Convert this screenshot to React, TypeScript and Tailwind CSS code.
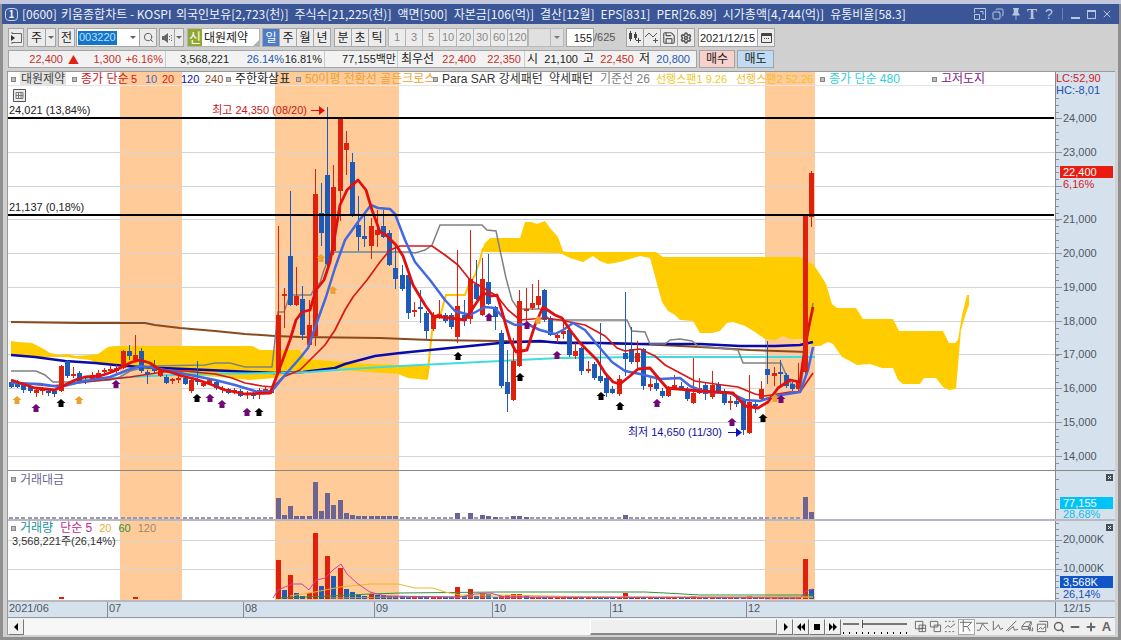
import { useState } from "react";
import type { ReactNode } from "react";
import clsx from "clsx";
import { Copy, Minus, Plus, Save, Search, Settings, X } from "lucide-react";
import { BsPinFill } from "react-icons/bs";

const UP = "#e0200c";
const DOWN = "#1e5ab8";

// high, body top, body bottom, low, direction (1 = up)
type Candle = [number, number, number, number, 0 | 1];

const candles: Candle[] = [
  [380, 382, 387, 388, 0],
  [380, 382, 387, 388, 0],
  [384, 385, 390, 393, 0],
  [385, 386, 391, 393, 0],
  [389, 390, 393, 397, 1],
  [387, 389, 391, 395, 1],
  [390, 391, 393, 396, 0],
  [390, 391, 394, 397, 0],
  [365, 366, 391, 392, 1],
  [360, 361, 376, 378, 0],
  [367, 374, 376, 378, 1],
  [371, 373, 381, 383, 0],
  [378, 380, 382, 384, 0],
  [372, 376, 379, 380, 1],
  [370, 373, 378, 379, 1],
  [368, 370, 372, 375, 1],
  [366, 369, 371, 373, 1],
  [365, 368, 371, 373, 1],
  [350, 351, 368, 369, 1],
  [345, 351, 356, 360, 0],
  [335, 355, 360, 361, 1],
  [348, 351, 371, 373, 0],
  [370, 372, 374, 384, 0],
  [360, 366, 371, 373, 0],
  [369, 371, 376, 377, 1],
  [375, 377, 383, 384, 0],
  [378, 379, 381, 384, 1],
  [376, 378, 380, 383, 1],
  [376, 378, 384, 385, 0],
  [379, 380, 391, 393, 1],
  [361, 379, 382, 385, 0],
  [381, 383, 386, 387, 1],
  [378, 380, 383, 385, 1],
  [381, 382, 388, 390, 0],
  [386, 388, 390, 393, 1],
  [388, 389, 393, 394, 0],
  [388, 390, 392, 394, 1],
  [389, 391, 396, 397, 0],
  [391, 393, 395, 399, 1],
  [392, 394, 396, 399, 0],
  [388, 390, 393, 399, 1],
  [387, 389, 392, 393, 1],
  [388, 390, 393, 394, 1],
  [226, 315, 373, 375, 1],
  [288, 294, 296, 328, 1],
  [191, 256, 305, 306, 0],
  [267, 296, 305, 306, 1],
  [286, 299, 335, 340, 0],
  [300, 325, 345, 347, 1],
  [169, 194, 336, 346, 1],
  [183, 213, 233, 246, 0],
  [107, 175, 264, 270, 0],
  [165, 187, 251, 255, 1],
  [118, 118, 191, 221, 1],
  [131, 143, 150, 175, 1],
  [153, 162, 216, 217, 0],
  [196, 225, 237, 251, 0],
  [215, 236, 239, 247, 0],
  [218, 226, 246, 259, 1],
  [210, 230, 235, 247, 1],
  [210, 226, 237, 238, 0],
  [230, 233, 265, 266, 0],
  [245, 268, 279, 289, 0],
  [265, 275, 289, 291, 0],
  [273, 275, 313, 319, 0],
  [302, 310, 312, 317, 1],
  [290, 307, 309, 323, 0],
  [311, 313, 331, 339, 0],
  [312, 316, 329, 331, 1],
  [300, 314, 318, 319, 1],
  [313, 315, 321, 323, 0],
  [313, 315, 327, 329, 0],
  [250, 306, 337, 343, 1],
  [300, 315, 321, 326, 0],
  [230, 279, 319, 324, 1],
  [260, 284, 299, 300, 0],
  [258, 279, 315, 316, 1],
  [254, 282, 304, 305, 0],
  [306, 307, 317, 330, 0],
  [330, 333, 386, 388, 0],
  [350, 382, 394, 412, 0],
  [338, 361, 400, 401, 1],
  [290, 301, 366, 367, 1],
  [288, 309, 311, 325, 1],
  [284, 303, 308, 310, 1],
  [280, 296, 305, 309, 1],
  [289, 290, 320, 322, 0],
  [316, 318, 335, 336, 0],
  [332, 335, 338, 343, 1],
  [318, 331, 334, 339, 1],
  [329, 330, 355, 357, 0],
  [343, 351, 356, 359, 1],
  [347, 348, 371, 375, 0],
  [361, 369, 371, 373, 1],
  [362, 364, 378, 380, 0],
  [323, 376, 381, 383, 0],
  [376, 378, 393, 397, 0],
  [386, 389, 393, 394, 0],
  [375, 379, 394, 396, 1],
  [292, 353, 359, 376, 0],
  [327, 349, 362, 364, 0],
  [341, 353, 362, 368, 1],
  [348, 349, 386, 390, 0],
  [378, 384, 387, 391, 1],
  [377, 383, 389, 391, 0],
  [388, 391, 396, 398, 0],
  [386, 388, 396, 397, 1],
  [375, 385, 388, 389, 1],
  [382, 386, 388, 390, 0],
  [387, 390, 399, 401, 0],
  [358, 393, 403, 404, 1],
  [378, 388, 393, 394, 1],
  [383, 385, 394, 400, 0],
  [371, 385, 397, 399, 1],
  [382, 384, 391, 393, 0],
  [389, 391, 403, 405, 0],
  [396, 401, 403, 410, 1],
  [398, 401, 404, 407, 0],
  [398, 400, 430, 435, 0],
  [375, 402, 433, 434, 1],
  [400, 404, 406, 413, 0],
  [381, 389, 399, 401, 1],
  [341, 369, 375, 384, 0],
  [367, 373, 376, 386, 1],
  [360, 372, 374, 388, 0],
  [373, 375, 386, 388, 0],
  [382, 384, 389, 391, 0],
  [363, 382, 389, 391, 1],
  [214, 215, 372, 374, 1],
  [171, 173, 217, 227, 1],
];

const barX = (i: number) => Math.round(11 + i * 6.2);

// bar index -> height in pixels, everything else is a flat tick
const turnover: Record<number, number> = {
  43: 21, 44: 4, 45: 13, 46: 3, 47: 3, 48: 3, 49: 37, 50: 8, 51: 26, 52: 14, 53: 19,
  54: 6, 55: 4, 56: 3, 57: 3, 58: 3, 59: 3, 60: 3, 61: 3, 62: 3, 72: 6, 74: 6, 76: 4,
  77: 3, 78: 2, 81: 3, 82: 3, 83: 2, 99: 4, 128: 22, 129: 7,
};

const volume: Record<number, [number, 0 | 1]> = {
  8: [2, 1], 20: [2, 1], 43: [39, 1], 44: [9, 0], 45: [24, 1], 46: [6, 0], 47: [3, 0],
  48: [6, 1], 49: [66, 1], 50: [13, 0], 51: [43, 1], 52: [23, 0], 53: [31, 1],
  54: [10, 0], 55: [7, 0], 56: [4, 0], 57: [3, 0], 58: [5, 1], 59: [4, 0], 60: [4, 0],
  61: [3, 0], 62: [3, 0], 63: [3, 0], 64: [2, 0], 65: [3, 1], 66: [2, 0], 67: [3, 0],
  72: [12, 1], 73: [3, 0], 74: [10, 1], 75: [3, 0], 76: [6, 1], 77: [5, 0], 79: [3, 1],
  80: [4, 1], 81: [5, 1], 82: [5, 1], 83: [4, 0], 86: [2, 0], 87: [2, 1], 99: [6, 1],
  110: [3, 1], 119: [3, 1], 128: [40, 1], 129: [10, 0],
};

const bands = [
  [120, 62],
  [275, 124],
  [765, 50],
];

const cloud = [
  "11,341 18,342 32,343 42,348 50,353 60,355 66,354 76,356 90,355 98,354 108,347 114,346 252,346 260,350 300,350 305,359 330,361 370,364 430,366 427,380 408,378 398,374 370,372 340,370 300,372 290,372 275,378 250,380 220,377 180,375 135,368 115,365 100,365 90,360 65,357 35,357 11,355",
  "482,252 484,244 490,238 520,238 525,222 532,222 537,224 545,221 550,228 558,237 563,251 566,252 656,252 663,257 798,257 803,258 808,262 813,264 820,274 826,284 832,304 837,308 856,308 863,319 893,319 899,331 943,331 949,343 955,343 958,340 962,315 967,295 969,295 969,305 966,313 961,330 956,389 949,390 943,387 936,378 924,378 920,384 903,384 898,380 893,368 882,368 870,364 857,365 850,361 842,357 833,344 828,342 820,346 813,346 803,339 790,339 783,336 775,340 765,339 755,332 745,326 733,322 727,323 720,331 712,333 700,333 693,321 680,320 675,315 668,311 662,302 656,280 650,258 640,256 620,262 608,264 600,261 593,256 583,262 570,258 560,253",
];

const lines = [
  { color: "#ffc400", width: 2, points: "427,379 432,332 437,315 441,313 446,295 465,295 468,287 475,275 480,260 483,248" },
  { color: "#8a4a20", width: 2, points: "11,322 80,323 145,323 155,325 180,328 215,331 245,334 275,336 300,337 380,338 430,340 500,341 600,343 640,344 700,347 750,350 808,352" },
  { color: "#0a0aa8", width: 2.5, points: "11,355 35,357 65,361 95,363 115,365 140,367 185,369 230,371 275,373 303,372 335,368 345,364 375,356 400,353 430,350 460,347 480,345 500,343 540,341 560,343 600,343 640,344 700,344 740,346 775,346 800,345 813,342" },
  { color: "#40dcdc", width: 2, points: "80,380 115,378 150,376 200,374 275,373 310,372 350,369 400,366 440,364 500,361 560,358 640,357 815,357" },
  { color: "#808080", width: 1.5, points: "11,371 36,371 45,375 53,382 75,382 110,380 120,377 130,371 150,366 205,365 215,363 230,363 245,367 272,367 275,340 278,312 284,312 290,295 311,295 316,285 320,283 324,270 330,255 335,252 410,252 415,253 425,250 432,245 440,225 482,225 487,230 496,231 500,250 506,278 512,300 518,309 540,309 550,320 627,320 632,331 645,332 650,344 665,344 670,340 680,339 692,341 698,346 738,350 743,363 781,363 787,377 793,387 801,385 808,335 813,303" },
  { color: "#d81818", width: 1.7, points: "11,382 50,386 70,384 95,381 130,377 150,374 170,371 185,371 215,374 232,378 245,383 262,386 273,387 283,377 300,370 310,360 325,345 335,330 345,310 353,297 367,280 380,262 390,250 400,246 432,246 445,255 458,265 470,280 490,292 497,296 508,310 520,320 545,318 560,320 585,325 605,336 617,348 625,351 640,349 655,356 665,365 680,373 695,381 715,384 738,387 755,394 765,396 790,392 800,392 813,373" },
  { color: "#4169e1", width: 2.5, points: "11,383 40,384 60,387 80,382 110,377 128,370 140,366 155,368 175,372 190,375 215,380 235,385 258,392 272,391 285,375 300,358 308,348 317,322 326,297 335,268 345,240 358,222 371,205 378,208 390,209 395,214 405,240 415,262 430,280 445,300 455,311 470,315 485,307 495,308 505,320 515,325 527,324 540,330 555,334 563,330 573,323 585,330 600,348 612,362 625,371 640,374 660,379 680,378 690,386 705,392 730,393 745,400 760,401 775,396 800,392 808,370 813,347" },
  { color: "#e01010", width: 2.8, points: "11,380 20,383 35,388 55,390 65,385 75,380 85,377 100,376 112,372 122,367 132,362 140,360 150,363 160,370 170,372 182,376 195,379 210,384 225,390 245,394 270,393 276,378 290,340 296,320 302,312 310,310 316,290 324,280 330,262 335,235 340,205 347,190 358,180 366,190 372,210 380,232 386,235 396,245 403,256 413,285 425,305 433,316 450,318 465,320 475,305 483,293 492,296 497,295 503,315 510,340 516,352 527,350 535,325 543,307 555,315 562,318 570,330 580,343 597,360 605,373 613,382 620,384 630,376 638,369 650,368 660,380 667,388 700,391 733,393 745,406 758,408 768,402 778,388 790,380 800,382 806,340 813,307" },
];

const marks: { color: string; at: [number, number][] }[] = [
  { color: "#f0a030", at: [[17, 400], [79, 400], [321, 258], [333, 290], [538, 320], [775, 398]] },
  { color: "#700878", at: [[36, 408], [116, 384], [210, 398], [222, 404], [247, 412], [489, 317], [527, 325], [557, 355], [657, 403], [732, 422], [781, 399]] },
  { color: "#000000", at: [[61, 403], [197, 398], [259, 412], [458, 356], [520, 377], [601, 396], [620, 406], [763, 418]] },
];

const prices = [
  [118, "24,000"],
  [152, "23,000"],
  [186, ""],
  [219, "21,000"],
  [253, "20,000"],
  [287, "19,000"],
  [321, "18,000"],
  [354, "17,000"],
  [388, "16,000"],
  [422, "15,000"],
  [456, "14,000"],
] as const;

const months = [
  [108, "07"],
  [244, "08"],
  [375, "09"],
  [493, "10"],
  [611, "11"],
  [747, "12"],
] as const;

const Bands = ({ y, height }: { y: number; height: number }) => (
  <>
    {bands.map(([x, width]) => (
      <rect key={x} x={x} y={y} width={width} height={height} fill="#ffcc99" />
    ))}
  </>
);

const Bullet = () => <span className="mr-1 size-[5px] shrink-0 border border-[#888] bg-[#bbb]" />;

const Legend = ({ width, color, bullet, children }: { width: string; color: string; bullet?: boolean; children: ReactNode }) => (
  <span className={clsx("flex shrink-0 items-center whitespace-nowrap", width, color)}>
    {bullet && <Bullet />}
    {children}
  </span>
);

const PricePanel = () => (
  <div className="relative min-w-0 flex-1 bg-white">
    <svg viewBox="8 72 1047 398" preserveAspectRatio="none" className="block h-[398px] w-full">
      <Bands y={72} height={398} />
      {prices.map(([y]) => (
        <line key={y} x1="8" x2="1055" y1={y + 0.5} y2={y + 0.5} stroke="#d4d4d4" />
      ))}
      <line x1="8" x2="1055" y1="85.5" y2="85.5" stroke="#e4e4e4" />
      {cloud.map((points) => (
        <polygon key={points} points={points} fill="#ffcc00" />
      ))}
      {lines.slice(0, 5).map((l) => (
        <polyline key={l.points} points={l.points} fill="none" stroke={l.color} strokeWidth={l.width} />
      ))}
      <g shapeRendering="crispEdges">
        {candles.map(([high, top, bottom, low, up], i) => (
          <g key={i} fill={up ? UP : DOWN}>
            <rect x={barX(i)} y={high} width="1" height={low - high} />
            <rect x={barX(i) - 2} y={top} width="5" height={bottom - top} />
          </g>
        ))}
      </g>
      {lines.slice(5).map((l) => (
        <polyline key={l.points} points={l.points} fill="none" stroke={l.color} strokeWidth={l.width} strokeLinejoin="round" />
      ))}
      <rect x="803" y="215" width="5" height="157" fill={UP} />
      <rect x="8" y="117" width="1046" height="2" fill="#000" />
      <rect x="8" y="214" width="1046" height="2" fill="#000" />
      {marks.map(({ color, at }) =>
        at.map(([x, y]) => (
          <path key={`${x}-${y}`} d={`M${x} ${y - 4}l4.5 4h-2v4h-5v-4h-2z`} fill={color} />
        ))
      )}
      <path d="M311 110h8v-4l6 4.500-6 4.500v-4h-8z" fill="#e81010" />
      <path d="M728 432h8v-4l6 4.500-6 4.500v-4h-8z" fill="#1010c0" />
      <g className="text-[11px]">
        <text x="9" y="114" fill="#222">24,021 (13,84%)</text>
        <text x="9" y="211" fill="#222">21,137 (0,18%)</text>
        <text x="307" y="114" fill="#c81818" textAnchor="end">최고 24,350 (08/20)</text>
        <text x="722" y="436" fill="#1010a0" textAnchor="end">최저 14,650 (11/30)</text>
      </g>
    </svg>
    <div className="absolute top-0 left-0 flex h-[14px] w-full items-center pl-[3px] text-[12px] leading-[14px]">
      <Legend width="w-[61px]" color="text-[#444]" bullet>
        <span className="bg-[#e4e4e4] px-px">대원제약</span>
      </Legend>
      <Legend width="w-[59px]" color="text-[#c82020]" bullet>종가 단순</Legend>
      <Legend width="w-[14px] text-[11px]" color="text-[#e01010]">5</Legend>
      <Legend width="w-[17px] text-[11px]" color="text-[#4169c0]">10</Legend>
      <Legend width="w-[19px] text-[11px]" color="text-[#e01010]">20</Legend>
      <Legend width="w-[24px] text-[11px]" color="text-[#1010b0]">120</Legend>
      <Legend width="w-[21px] text-[11px]" color="text-[#8a4a20]">240</Legend>
      <Legend width="w-[70px]" color="text-[#222]" bullet>주한화살표</Legend>
      <Legend width="w-[137px]" color="text-[#f0a030]" bullet>50이평 전환선 골든크로스</Legend>
      <Legend width="w-[116px]" color="text-[#333]" bullet>Para SAR 강세패턴</Legend>
      <Legend width="w-[51px]" color="text-[#333]">약세패턴</Legend>
      <Legend width="w-[56px]" color="text-[#808080]">기준선 26</Legend>
      <Legend width="w-[80px] text-[11px]" color="text-[#ecc828]">선행스팬1 9.26</Legend>
      <Legend width="w-[84px] text-[11px]" color="text-[#f4bc30]">선행스팬2 52.26</Legend>
      <Legend width="w-[112px]" color="text-[#30d0d8]" bullet>종가 단순 480</Legend>
      <Legend width="w-[70px]" color="text-[#882088]" bullet>고저도지</Legend>
    </div>
    <svg viewBox="0 0 13 13" className="absolute top-[17px] left-[5px] size-[13px]" fill="none" stroke="#555">
      <path d="M.5.5h12v12H.5z" fill="#eee" />
      <path d="M3 3.500h7v6H3zM3 6.500h7M5.500 3.500v6M8 3.500v6" stroke="#777" />
    </svg>
  </div>
);

const Ticks = ({ from, to, step }: { from: number; to: number; step: number }) => (
  <>
    {Array.from({ length: Math.floor((to - from) / step) + 1 }, (_, i) => (
      <rect key={i} x="0" y={Math.round(from + i * step)} width="3" height="1" fill="#8a929c" />
    ))}
  </>
);

const PriceAxis = () => (
  <svg viewBox="0 72 59 398" className="block h-[398px] w-[60px] shrink-0 border-l border-[#888] bg-[#d6e1ee] text-[11px]">
    <Ticks from={98} to={468} step={6.75} />
    <text x="0" y="82" fill="#d02020">LC:52,90</text>
    <text x="0" y="94" fill="#2050b0">HC:-8,01</text>
    {prices.map(([y, label]) => (
      <g key={y}>
        <rect x="0" y={y} width="6" height="1" fill="#8a929c" />
        <text x="7" y={y + 4} fill="#505860">{label}</text>
      </g>
    ))}
    <rect x="4" y="166" width="53" height="12" fill="#e81c10" />
    <text x="7" y="176" fill="#fff">22,400</text>
    <text x="7" y="188" fill="#d02020">6,16%</text>
  </svg>
);

const CloseBox = ({ y }: { y: number }) => (
  <g>
    <rect x="50" y={y} width="7" height="7" fill="#444c54" />
    <path d={`M52 ${y + 2}l3 3m0-3l-3 3`} stroke="#fff" />
  </g>
);

const TurnoverPanel = () => (
  <div className="flex border-t border-[#888]">
    <div className="relative min-w-0 flex-1 bg-white">
      <svg viewBox="8 471 1047 48" preserveAspectRatio="none" className="block h-[48px] w-full" shapeRendering="crispEdges">
        <Bands y={471} height={48} />
        {candles.map((_, i) => (
          <rect
            key={i}
            x={barX(i) - 2}
            y={519 - (turnover[i] ?? 2)}
            width={turnover[i] ? 5 : 4}
            height={turnover[i] ?? 2}
            fill={turnover[i] ? "#6c6494" : "#9c98b0"}
          />
        ))}
      </svg>
      <div className="absolute top-[2px] left-[3px] flex h-[13px] items-center text-[12px] text-[#6c6494]">
        <Bullet />
        <span>거래대금</span>
      </div>
    </div>
    <svg viewBox="0 471 59 48" className="block h-[48px] w-[60px] shrink-0 border-l border-[#888] bg-[#d6e1ee] text-[11px]">
      <Ticks from={479} to={518} step={10} />
      <CloseBox y={474} />
      <rect x="4" y="497" width="53" height="12" fill="#00c4f8" />
      <text x="7" y="507" fill="#fff">77,155</text>
      <text x="7" y="518" fill="#10bce8">28,68%</text>
    </svg>
  </div>
);

const VolumePanel = () => (
  <div className="flex border-t-2 border-[#b8b8c0]">
    <div className="relative min-w-0 flex-1 bg-white">
      <svg viewBox="8 521 1047 79" preserveAspectRatio="none" className="block h-[79px] w-full">
        <Bands y={521} height={79} />
        <path d="M8 540.500h1047M8 569.500h1047" stroke="#d4d4d4" />
        <g shapeRendering="crispEdges">
          {candles.map(([, , , , up], i) => {
            const [height, dir] = volume[i] ?? [i > 62 ? 2 : 0, up];
            return <rect key={i} x={barX(i) - 2} y={599 - height} width="5" height={height} fill={dir ? UP : DOWN} />;
          })}
        </g>
        <g fill="none">
          <path d="M330 598L400 597 600 597 813 597" stroke="#a09080" />
          <path d="M280 598L330 596 370 594 400 593 500 592 645 592 665 593 700 595 813 595" stroke="#30903c" />
          <path d="M290 596L315 592 340 587 370 584 398 584 415 588 433 588 445 592 460 595 500 595 600 597 813 597" stroke="#e8b830" />
          <path d="M273 598L278 590 285 587 292 584 302 584 309 590 316 580 325 578 333 570 341 564 347 574 358 584 370 592 385 596 460 597 475 594 490 593 505 597 800 598 806 591 813 589" stroke="#d040a0" />
        </g>
      </svg>
      <div className="absolute top-px left-[3px] flex h-[12px] items-center gap-[7px] text-[12px] leading-[12px]">
        <span className="flex items-center text-[#209098]">
          <Bullet />
          거래량
        </span>
        <span className="text-[#c02890]">단순 5</span>
        <span className="text-[11px] text-[#e0b030]">20</span>
        <span className="text-[11px] text-[#30903c]">60</span>
        <span className="text-[11px] text-[#a08870]">120</span>
      </div>
      <span className="absolute top-[14px] left-1 text-[11px] leading-[12px] text-[#333]">3,568,221주(26,14%)</span>
    </div>
    <svg viewBox="0 521 59 79" className="block h-[79px] w-[60px] shrink-0 border-l border-[#888] bg-[#d6e1ee] text-[11px]">
      <Ticks from={523} to={599} step={5.8} />
      <CloseBox y={524} />
      <rect x="0" y="540" width="6" height="1" fill="#8a929c" />
      <rect x="0" y="569" width="6" height="1" fill="#8a929c" />
      <text x="7" y="543" fill="#505860">20,000K</text>
      <text x="7" y="572" fill="#505860">10,000K</text>
      <rect x="4" y="576" width="53" height="12" fill="#1054c8" />
      <text x="7" y="586" fill="#fff">3,568K</text>
      <text x="7" y="598" fill="#2050b0">26,14%</text>
    </svg>
  </div>
);

const TimeAxis = () => (
  <div className="flex border-t-2 border-b border-t-[#b8b8c0] border-b-[#999] bg-[#d6e1ee] text-[11px]">
    <svg viewBox="8 602 1047 15" preserveAspectRatio="none" className="block h-[15px] min-w-0 flex-1">
      <text x="9" y="612" fill="#505860">2021/06</text>
      {months.map(([x, label]) => (
        <g key={label}>
          <rect x={x - 1} y="602" width="1" height="15" fill="#889" />
          <text x={x + 1} y="612" fill="#505860">{label}</text>
        </g>
      ))}
    </svg>
    <div className="w-[60px] shrink-0 border-l border-[#888] pl-[7px] leading-[13px] text-[#505860]">12/15</div>
  </div>
);

const TitleBar = () => (
  <header className="mx-0.5 flex h-5 items-center bg-[#3a5696] pr-1 pl-[3px] font-['Noto_Sans_CJK_KR',sans-serif] text-[12px] whitespace-nowrap text-[#eef2fa]">
    <span className="mr-1 flex size-[13px] items-center justify-center rounded-sm border border-[#c8d4ec] text-[10px] leading-none font-bold">1</span>
    <h1 className="flex min-w-0 flex-1 gap-[6px]">
      <span className="w-[33px]">[0600]</span>
      <span className="w-[109px]">키움종합차트 - KOSPI</span>
      <span>외국인보유[2,723(천)]</span>
      <span>주식수[21,225(천)]</span>
      <span>액면[500]</span>
      <span>자본금[106(억)]</span>
      <span>결산[12월]</span>
      <span>EPS[831]</span>
      <span>PER[26.89]</span>
      <span>시가총액[4,744(억)]</span>
      <span>유통비율[58.3]</span>
    </h1>
    <div className="flex items-center text-[#b8c6e4]">
      <button aria-label="도킹" className="flex w-[18px] justify-center">
        <svg viewBox="0 0 12 12" className="size-3" fill="none" stroke="currentColor">
          <path d="M.5 5V.5h11v11H7M.5 6.500h5v5h-5zM6 3.500h3v3" />
        </svg>
      </button>
      <button aria-label="복사" className="flex w-[18px] justify-center">
        <Copy className="size-3 -scale-x-100" strokeWidth={2} />
      </button>
      <button aria-label="고정" className="flex w-[17px] justify-center">
        <BsPinFill className="size-3" />
      </button>
      <button className="w-4 font-['Liberation_Serif',serif] text-[15px] leading-4 font-bold">T</button>
      <button className="w-[18px] font-['Liberation_Sans',sans-serif] text-[14px] leading-4">?</button>
      <span className="mx-1 h-3 w-px bg-[#6a82b8]" />
      <button aria-label="최소화" className="flex w-4 justify-center pt-2">
        <span className="h-0.5 w-[9px] bg-current" />
      </button>
      <button aria-label="최대화" className="flex w-4 justify-center">
        <span className="h-[9px] w-[9px] border border-t-2 border-current" />
      </button>
      <button aria-label="닫기" className="flex w-4 justify-center">
        <X className="size-3" strokeWidth={2} />
      </button>
    </div>
  </header>
);

const ToolButton = ({ label, className, children }: { label?: string; className?: string; children: ReactNode }) => (
  <button
    aria-label={label}
    className={clsx("flex h-[19px] shrink-0 items-center justify-center border border-[#a4a4a4] bg-[#ececec] leading-none", className)}
  >
    {children}
  </button>
);

const Caret = () => <span className="mx-[3px] border-x-[3px] border-t-[3px] border-x-transparent border-t-[#666]" />;

const Toolbar = () => {
  const [period, setPeriod] = useState("일");

  const periodButton = (p: string) => (
    <button
      key={p}
      onClick={() => setPeriod(p)}
      className={clsx(
        "-mr-px h-[19px] w-[18px] shrink-0 border border-[#a8a8a8] leading-none",
        period === p ? "bg-[#4c7cc8] text-white" : "bg-[#ececec] text-[#222]"
      )}
    >
      {p}
    </button>
  );

  return (
    <div className="flex h-[19px] items-center text-[12px] text-[#222]">
      <ToolButton label="메뉴" className="w-[16px]">
        <svg viewBox="0 0 12 12" className="size-3" fill="none" stroke="#666">
          <path d="M2 1.500h9.500v9H2M2 0v2M2 10v2" />
          <path d="M1 3l4 3-4 3z" fill="#333" stroke="none" />
        </svg>
      </ToolButton>
      <ToolButton className="ml-[3px] w-[19px]">주</ToolButton>
      <ToolButton label="종목 구분" className="-ml-px w-[11px]"><Caret /></ToolButton>
      <ToolButton className="ml-[2px] w-[17px]">전</ToolButton>
      <div className="ml-px flex h-[19px] w-[64px] items-center border border-[#a4a4a4] bg-white pl-px">
        <input aria-label="종목코드" defaultValue="003220" className="h-[14px] w-[39px] bg-[#1474c8] pl-px text-[11px] text-[#b8e0ff]" />
        <span className="flex-1" />
        <Caret />
      </div>
      <ToolButton label="검색" className="-ml-px w-[18px]"><Search className="size-[11px] text-[#555]" /></ToolButton>
      <ToolButton label="소리" className="ml-[2px] w-[16px]">
        <svg viewBox="0 0 13 12" className="h-3 w-[13px]" fill="#666">
          <path d="M1 4h2l4-3v10l-4-3H1z" />
          <path d="M8 4h1v1H8zM8 7h1v1H8zM10 3h1v1h-1zM10 5.500h1v1h-1zM10 8h1v1h-1z" />
        </svg>
      </ToolButton>
      <ToolButton label="소리 설정" className="-ml-px w-[10px]"><Caret /></ToolButton>
      <div className="relative ml-[3px] flex h-[19px] w-[73px] items-center gap-0.5 border border-[#b4b4b4] bg-white">
        <span className="bg-[#90a830] px-px text-[13px] leading-[17px] text-white">신</span>
        <span>대원제약</span>
        <span className="absolute right-0 bottom-0 border-b-[6px] border-l-[6px] border-b-[#b0b0b0] border-l-transparent" />
      </div>
      <div className="ml-[2px] flex">{["일", "주", "월", "년"].map(periodButton)}</div>
      <div className="ml-[4px] flex">{["분", "초", "틱"].map(periodButton)}</div>
      <div className="ml-[3px] flex text-[11px] text-[#888]">
        {["1", "3", "5", "10", "20", "30", "60", "120"].map((n) => (
          <button key={n} className="-mr-px h-[19px] w-[18px] shrink-0 border border-[#b4b4b4] bg-[#ececec] leading-none last:w-[21px]">
            {n}
          </button>
        ))}
      </div>
      <div className="ml-px flex h-[19px] w-[36px] items-center justify-end border border-[#b4b4b4] bg-[#e4e4e4] opacity-80">
        <span className="h-full border-l border-[#b4b4b4]" />
        <Caret />
      </div>
      <input aria-label="표시 봉수" defaultValue="155" className="ml-0.5 h-[19px] w-[28px] border border-[#a4a4a4] bg-white pr-px text-right text-[11px]" />
      <span className="w-[32px] shrink-0 text-[11px] text-[#555]">/625</span>
      <ToolButton label="캔들 추가" className="w-[18px]">
        <svg viewBox="0 0 14 13" className="h-[13px] w-[14px]" fill="#444">
          <path d="M1 2h3v6H1zM2 0h1v10H2zM6 3h3v4H6zM7 1h1v8H7zM8 9h5v1H8zM10 7h1v5h-1z" />
        </svg>
      </ToolButton>
      <ToolButton label="지표 추가" className="-ml-px w-[18px]">
        <svg viewBox="0 0 14 13" className="h-[13px] w-[14px]" fill="none" stroke="#555">
          <path d="M0 6l4-4 4 4 4-4M8 9.500h5M10.500 7v5" />
        </svg>
      </ToolButton>
      <ToolButton label="저장" className="-ml-px w-[18px]"><Save className="size-[14px] text-[#555]" strokeWidth={2} /></ToolButton>
      <ToolButton label="설정" className="-ml-px w-[18px]"><Settings className="size-[12px] text-[#555]" strokeWidth={3} /></ToolButton>
      <input aria-label="일자" defaultValue="2021/12/15" className="ml-[3px] h-[19px] w-[60px] border border-[#a4a4a4] bg-white pl-px text-[11px]" />
      <ToolButton label="달력" className="-ml-px w-[18px]">
        <svg viewBox="0 0 11 10" className="h-[10px] w-[11px]" fill="none" stroke="#444">
          <path d="M.5.5h10v9H.5z" />
          <path d="M0 2h11" strokeWidth="2" />
          <path d="M3 5.500h1M5 5.500h1M7 5.500h1" />
        </svg>
      </ToolButton>
    </div>
  );
};

const QuoteBar = () => (
  <div className="mt-[3px] flex h-[18px] items-center text-[11px] leading-4 whitespace-nowrap text-[#222]">
    <div className="flex h-[18px] w-[689px] items-center border border-[#a4a4a4] bg-[#f2f2f2]">
      <span className="w-[54px] text-right text-[#c83028]">22,400</span>
      <span className="w-[16px] text-right font-['Noto_Sans_CJK_KR',sans-serif] text-[#e02010]">▲</span>
      <span className="w-[42px] text-right text-[#c83028]">1,300</span>
      <span className="w-[45px] border-r border-[#ccc] pr-0.5 text-right text-[#c83028]">+6.16%</span>
      <span className="w-[63px] text-right">3,568,221</span>
      <span className="w-[55px] text-right text-[#2858b0]">26.14%</span>
      <span className="w-[41px] border-r border-[#ccc] pr-0.5 text-right">16.81%</span>
      <span className="w-[73px] border-r border-[#ccc] pr-px text-right">77,155백만</span>
      <span className="w-[37px] pl-[3px] text-[12px]">최우선</span>
      <span className="w-[41px] text-right text-[#c83028]">22,400</span>
      <span className="w-[49px] border-r border-[#ccc] pr-[3px] text-right text-[#c83028]">22,350</span>
      <span className="w-[14px] pl-0.5 text-[12px]">시</span>
      <span className="w-[39px] text-right">21,100</span>
      <span className="w-[17px] pl-[5px] text-[12px]">고</span>
      <span className="w-[39px] text-right text-[#c83028]">22,450</span>
      <span className="w-[17px] pl-[5px] text-[12px]">저</span>
      <span className="w-[39px] text-right text-[#2858b0]">20,800</span>
    </div>
    <button className="ml-[2px] h-[18px] w-[36px] border border-[#a4a4a4] bg-[#f8d0cc] text-[12px] leading-none">매수</button>
    <button className="ml-[2px] h-[18px] w-[37px] border border-[#a4a4a4] bg-[#c0dcf4] text-[12px] leading-none">매도</button>
  </div>
);

const ScrollButton = ({ label, path }: { label: string; path: string }) => (
  <button aria-label={label} className="flex h-4 w-4 shrink-0 items-center justify-center border border-[#f8f8f8] border-r-[#777] border-b-[#777] bg-[#f0f0f0]">
    <svg viewBox="0 0 10 10" className="size-2.5" fill="#000">
      <path d={path} />
    </svg>
  </button>
);

const drawTools = [
  { label: "창 추가", d: "M1.500 1.500h8v8h-8zM5.500 5.500h7v7h-7zM9 5.500v7M5.500 9h7" },
  { label: "창 복제", d: "M1.500 1.500h8v6h-8zM5.500 5.500h7v7h-7z" },
  { label: "점선", d: "M1 1.500h2M5 1.500h2M9 1.500h2M1 12.500h2M5 12.500h2M9 12.500h2M1 9l3-3 3 2 5-4" },
  { label: "고점", d: "M0 2.500h13M3.500 0v13M4 7h4l4-4M8 7l3 5" },
  { label: "저점", d: "M0 3.500h13M1 11h3l3-7 3 4 4 4" },
  { label: "수직선", d: "M2.500 1v10M2 11l4-3 2-3 2 5 3-1" },
  { label: "추세선", d: "M0 12L11 1M2 12l6-5 1 4 4-1" },
  { label: "전체 삭제", d: "M1 7l4-5h6l-3 5zM1 7v3h7V7M8 10l3-5V2M9 12l1-4 1 4M12.500 8v4" },
  { label: "차트 복사", d: "M3.500 1.500h9v7M1.500 4.500h9v8h-9zM3 10l2-2 2 2 3-3" },
];

const BottomBar = () => (
  <div className="flex h-[17px] items-center bg-[#efefef]">
    <ScrollButton label="왼쪽" path="M7 1v8L3 5z" />
    <div className="flex h-4 min-w-0 flex-1 justify-end bg-[#f7f7f7]">
      <div className="h-4 w-[187px] border border-[#fff] border-r-[#888] border-b-2 border-b-[#888] bg-[#efefef]" />
    </div>
    <ScrollButton label="재생" path="M4 1v8l4-4z" />
    <ScrollButton label="뒤로" path="M5 1v8L1 5zM9 1v8L5 5z" />
    <ScrollButton label="정지" path="M2 2h6v6H2z" />
    <ScrollButton label="앞으로" path="M1 1v8l4-4zM5 1v8l4-4z" />
    <div className="ml-[2px] w-[64px] shrink-0">
      <input
        type="range"
        aria-label="속도"
        defaultValue={27}
        className="block h-2 w-full appearance-none bg-[linear-gradient(#777,#777)] bg-[length:100%_2px] bg-center bg-no-repeat [&::-webkit-slider-thumb]:h-2 [&::-webkit-slider-thumb]:w-1 [&::-webkit-slider-thumb]:appearance-none [&::-webkit-slider-thumb]:border-r [&::-webkit-slider-thumb]:border-[#555] [&::-webkit-slider-thumb]:bg-[#efefef]"
      />
      <div className="mt-1 flex justify-between">
        {Array.from({ length: 11 }, (_, i) => (
          <span key={i} className="h-0.5 w-px bg-black" />
        ))}
      </div>
    </div>
    <div className="ml-[6px] flex shrink-0 items-center pr-px text-[#666]">
      {drawTools.map((t) => (
        <button
          key={t.label}
          aria-label={t.label}
          className={clsx("flex h-4 shrink-0 items-center justify-center", t.label === "고점" ? "w-[17px] border border-[#aaa] bg-[#fafafa]" : "w-[15px]")}
        >
          <svg viewBox="0 0 14 14" className="size-[13px]" fill="none" stroke="currentColor">
            <path d={t.d} />
          </svg>
        </button>
      ))}
      <button aria-label="확대경" className="ml-px flex w-4 justify-center"><Search className="size-3" strokeWidth={3} /></button>
      <button aria-label="축소" className="flex w-4 justify-center"><Minus className="size-3" strokeWidth={4} /></button>
      <button aria-label="확대" className="flex w-4 justify-center"><Plus className="size-3" strokeWidth={4} /></button>
      <button className="w-[15px] text-[13px] leading-4 font-bold">A</button>
    </div>
  </div>
);

export default function App() {
  return (
    <div className="min-h-screen bg-[#909090] font-['Liberation_Sans','Noto_Sans_CJK_KR',sans-serif]">
      <div className="h-1 bg-[#c4c8dc]" />
      <TitleBar />
      <main className="mx-[3px] border-r-[3px] border-b-2 border-l-[4px] border-[#d0d0d0] bg-[#d0d0d0] pt-1">
        <div className="pl-px">
          <Toolbar />
          <QuoteBar />
        </div>
        <div className="mt-[3px] border border-r-0 border-b-0 border-[#999]">
          <div className="flex">
            <PricePanel />
            <PriceAxis />
          </div>
          <TurnoverPanel />
          <VolumePanel />
          <TimeAxis />
          <BottomBar />
        </div>
      </main>
    </div>
  );
}
